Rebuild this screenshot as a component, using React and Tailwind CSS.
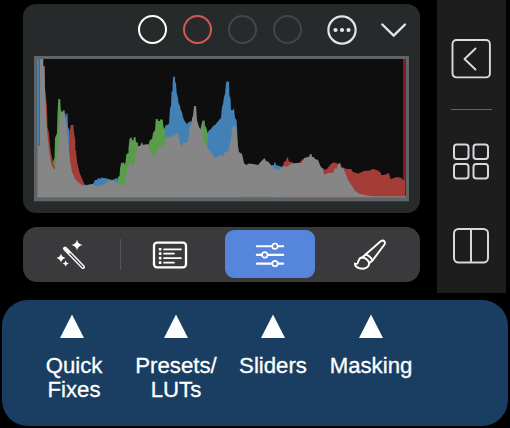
const BLUE =
  "M37 197V59H39.6V146H42V197Z M64 197V114L65 113L66 117L66.3 113.5H67.5L68 127L69.5 130L70.5 150L72 165L75 174L80 182L86 185L93 184L95 180L97 180L98 178L100 179L101 177.5L104 178L107 178.5L112 180L117 178L118 180L121 182L124 184L125 187V197Z M165 197V126L169 124L170 108L171 106L171.5 92L172.5 91L172.7 82L173.5 76L175 77L175.2 82L176 83L176.7 93L178 98L178.5 103L180 106L180.7 110L182 112L182.7 116L184 120L186.7 124L189 122L191 121L203 132L207 135.5L208.5 131L211 129L213 126L215 125L217.7 121.7L219 120L221 118L222 107L223 104L224 97L225 94L226 83L227 81L229 82L229.5 96L230.5 98L231 110H233L234 108L235 118L236.5 120L237 126L238 147V197Z M272 197V165L274 165V163L275 162L276 165L281 166.5V197Z";
const GREEN =
  "M51 197V170L52.5 167L53.5 160L54.5 158L55 138L57 133L57.5 113L58.3 99H60.2L60.8 110L62 113L63 125V197Z M117 197V184L118 177L119.5 176L120 169L121 163L124 162.5L125 165L126.5 154L128.5 153V148L129.5 139L131 137L133 141L134 137H135.5L136 142L138 143V147L148 146L150 140L152 139L153 133L155 130L155.8 119H157.5L158.5 121L160 121V119.5H162.7L163.5 127L165 129L166 145V197Z M200 197V131L202.5 120.5H204.6L205 126L206 127L208 134V140Z";
const RED =
  "M43 197V66L44.5 67L45 89L47 107L47.5 127L49 133L50 145L51 153L53 162L55 168V197Z M69 197V140L70 131L70.7 125H73.5L74 133L75.3 140V150L76 151L77 161.5L79.3 171.7L81.7 178L84.3 184V197Z M283 197V166L284 161.7L286 161L287 157L288 158L289 162L291 161.5L293 163L300 163L302 159L304 161L321 170L323 168L325 170L327 169L330 165L333 162.5L336 163L338 164L340 162.5L341.7 167L346.7 169L351 169L353 172L358 173.5L362 172L365 170.7H369L373 169L378 170.5L381 173V175L384 175L389 173L390.5 179L394 178L397 177L401.7 178L403.5 181V59H405.5V197Z";
const GRAY =
  "M38 197V146H39.6V59H43.3V66H44.5L45 88L46 110L47 130L49 150L51 163L53 168L55 170L56 160L57.5 155L59 138L60 122L61.3 111L63 112L63.3 110H64.5L65 117L66 120L67 131L68 140L70 160L72 172L75 179L80 184L85 186L92 184L96 186L100 186L105 184L108 181L111 180L114 181L118 184L124 186L126 177L128 166L130 164L134 166L136 153L138 146L140 146L142 142L143 145L148 144L150 150L152 155.5H155.5L158 150L160 145L163 147L165 139L167 137L168.5 136L170 138L173 135L175 136L177 132L178.5 136L180 143L181.7 147L183 142.5L186.5 143L188.7 137L190 126L191.5 124L192 118L193 116L194 106H196L197 120L199 127L202.5 131.5L203.5 141L206.7 146.7L210.7 151.7L215 158L217 157L220 155L222 156L224 155L225 152L228 151L231 140L232 129L233.5 125L235 127L236.5 129L237 140L239 152L242 154L243 158L244 163L246 165L249 163.5L253 164L258 165L261 161.5L264.5 158L266 161L268 161.5L272 166L275 169L280 170L282 166L287 166.7L291 164L297 163L302 162.5L304 158L308 157L309.5 156L310 154L311.5 154L312 157L314 157L315 159L318 160L320 165L321 167L323 169L324 175L328 173L333 172.7L335 168L336.5 169L338 164L340 163.5L341 168L343 168L345 172L348 180L352 186L355 190.7L360 194L367 195.5L378 196.7Z";

function Histogram() {
  return (
    <svg className="block h-[146px] w-[375px] shrink-0" viewBox="34 56 375 146">
      <rect x="34" y="56" width="375" height="145.3" fill="#606466" />
      <rect x="37" y="59" width="369" height="138" fill="#0d0e0d" />
      <path d={BLUE} fill="#4280b6" />
      <path d={GREEN} fill="#599c4c" />
      <path d={RED} fill="#a43c38" />
      <path d={GRAY} fill="#868686" />
      <path d="M404.5 59V180" stroke="#872229" strokeWidth="1.6" />
      <path d="M37 196.8H406" stroke="#888" strokeWidth="1" />
    </svg>
  );
}

function Header() {
  return (
    <div className="mb-px flex h-[51px] w-full items-center justify-end pr-[13px]">
      <div className="flex gap-[16px]">
        <span className="size-[29px] rounded-full border-2 border-white" />
        <span className="size-[29px] rounded-full border-2 border-[#d15b52]" />
        <span className="size-[29px] rounded-full border-2 border-[#434647]" />
        <span className="size-[29px] rounded-full border-2 border-[#434647]" />
      </div>
      <svg className="ml-[25px] size-[30px]" viewBox="0 0 30 30" fill="none">
        <circle cx="15" cy="15" r="13.6" stroke="#e2e5e6" strokeWidth="2.2" />
        <g fill="#e8eaeb">
          <circle cx="8.5" cy="15" r="2.1" />
          <circle cx="15" cy="15" r="2.1" />
          <circle cx="21.5" cy="15" r="2.1" />
        </g>
      </svg>
      <svg className="ml-[23px] h-[16px] w-[27px]" viewBox="0 0 27 16" fill="none" stroke="#e2e5e6" strokeWidth="2.4" strokeLinecap="round" strokeLinejoin="round">
        <path d="M2.3 2.5L13.7 13.7L25 2.5" />
      </svg>
    </div>
  );
}

function WandIcon() {
  return (
    <svg className="size-[32px]" viewBox="0 0 32 32" fill="none">
      <path d="M9 9.5L27 28" stroke="#f2f2f4" strokeWidth="4" strokeLinecap="round" />
      <path d="M14 14.7L26.8 27.8" stroke="#3a3a3d" strokeWidth="1.2" strokeLinecap="round" />
      <g fill="#fff">
        <path d="M21 0.5Q21.7 5 26.5 6Q21.7 7 21 11.5Q20.3 7 15.5 6Q20.3 5 21 0.5Z" />
        <path d="M5 14.5Q5.6 18 9.5 19Q5.6 20 5 23.5Q4.4 20 0.5 19Q4.4 18 5 14.5Z" />
        <path d="M9.7 21.5Q10.2 24 13 24.5Q10.2 25 9.7 27.5Q9.2 25 6.5 24.5Q9.2 24 9.7 21.5Z" />
      </g>
    </svg>
  );
}

function PresetsIcon() {
  return (
    <svg className="h-[28px] w-[36px]" viewBox="0 0 36 28" fill="none" stroke="#fff">
      <rect x="2" y="1.7" width="32" height="24.6" rx="3" strokeWidth="2.3" />
      <path d="M12 8.3H29M12 12.6H22M12 17.1H29M12 21.6H22" strokeWidth="1.8" strokeLinecap="round" />
      <path d="M6.8 8.3H9.4M6.8 12.6H9.4M6.8 17.1H9.4M6.8 21.6H9.4" strokeWidth="2.6" />
    </svg>
  );
}

function SlidersIcon() {
  return (
    <svg className="mt-[2px] h-[26px] w-[30px]" viewBox="0 0 30 26" stroke="#fff" strokeLinecap="round" fill="#5685dc">
      <path d="M1.8 4.2H28.2M1.8 12.9H28.2M1.8 21.6H28.2" strokeWidth="2.1" />
      <circle cx="20" cy="4.2" r="2.7" strokeWidth="1.7" />
      <circle cx="9.7" cy="12.9" r="2.7" strokeWidth="1.7" />
      <circle cx="20" cy="21.6" r="2.7" strokeWidth="1.7" />
    </svg>
  );
}

function BrushIcon() {
  return (
    <svg className="size-[32px]" viewBox="0 0 32 32" fill="none" stroke="#fff" strokeWidth="1.9" strokeLinecap="round" strokeLinejoin="round">
      <path d="M11.5 15.5L26.7 2.2Q29 .8 30.5 2.5Q31.4 4 30.3 5.8L18.4 21.6" />
      <path d="M11.5 15.5Q16.5 16.8 18.4 21.6L15.2 24.3Q13.5 19 8.2 18.5Z" />
      <path d="M8.2 18.5C4.8 18.5 4.7 22 3.8 23.8Q2.8 25.7 .9 24.5Q.8 27.5 4.7 29C10.5 31 15 28.5 15.2 24.3" />
    </svg>
  );
}

function Toolbar() {
  return (
    <div className="flex h-[55px] w-[397px] items-center rounded-[14px] bg-[#3a3a3d]">
      <div className="flex w-[97px] shrink-0 justify-center">
        <WandIcon />
      </div>
      <span className="h-[31px] w-px shrink-0 bg-[#555558]" />
      <div className="flex w-[98px] shrink-0 justify-center">
        <PresetsIcon />
      </div>
      <div className="mb-[1px] ml-[6px] flex h-[48px] w-[90px] shrink-0 items-center justify-center rounded-[9px] bg-[#5685dc]">
        <SlidersIcon />
      </div>
      <div className="flex flex-1 justify-center pl-[4px]">
        <BrushIcon />
      </div>
    </div>
  );
}

function Sidebar() {
  return (
    <aside className="ml-[17px] flex h-[293px] w-[69px] flex-col items-center bg-[#1d1d1e] pr-px">
      <svg className="mt-[39px] size-[40px]" viewBox="0 0 40 40" fill="none" stroke="#dcdae0" strokeWidth="1.9" strokeLinecap="round" strokeLinejoin="round">
        <rect x="1.5" y="1" width="37.4" height="37.4" rx="4" />
        <path d="M24.5 9.5L13.5 20L24.5 30.5" />
      </svg>
      <span className="mt-[30px] h-px w-[41px] bg-[#656568]" />
      <svg className="mt-[32px] size-[38px]" viewBox="0 0 38 38" fill="none" stroke="#d9d6de" strokeWidth="2">
        <rect x="2" y="2.5" width="14.5" height="14.5" rx="2.8" />
        <rect x="21.5" y="2.5" width="14.5" height="14.5" rx="2.8" />
        <rect x="2" y="22" width="14.5" height="14.5" rx="2.8" />
        <rect x="21.5" y="22" width="14.5" height="14.5" rx="2.8" />
      </svg>
      <svg className="mt-[46px] size-[38px]" viewBox="0 0 38 38" fill="none" stroke="#d9d6de" strokeWidth="2">
        <rect x="2" y="3" width="34" height="33.5" rx="4.5" />
        <path d="M19 3V36" />
      </svg>
    </aside>
  );
}

function Label({ lines, className, arrow = "" }) {
  return (
    <div className={`flex shrink-0 flex-col items-center ${className}`}>
      <svg className={`h-[24px] w-[26px] ${arrow}`} viewBox="0 0 26 24">
        <path d="M13 0.5L25 24H1Z" fill="#fff" />
      </svg>
      <div className="mt-[16px] text-center text-[22.2px] leading-[24px] whitespace-nowrap text-white [-webkit-text-stroke:0.3px_white]">
        {lines.map((line) => (
          <div key={line}>{line}</div>
        ))}
      </div>
    </div>
  );
}

export default function App() {
  return (
    <div className="flex h-[428px] w-[510px] flex-col overflow-hidden bg-black font-['Liberation_Sans',Arial,sans-serif]">
      <div className="flex h-[300px]">
        <div className="ml-[23px] flex w-[397px] flex-col pt-[4px]">
          <section className="mb-[14px] flex h-[209px] flex-col items-center rounded-[13px] bg-[#272a2b]">
            <Header />
            <Histogram />
          </section>
          <Toolbar />
        </div>
        <Sidebar />
      </div>
      <div className="ml-[2px] flex h-[126px] w-[506px] rounded-[26px] bg-[#1a3e62] pt-[14px]">
        <Label lines={["Quick", "Fixes"]} className="ml-[27px] w-[90px]" arrow="mr-[5px]" />
        <Label lines={["Presets/", "LUTs"]} className="ml-[12px] w-[90px]" />
        <Label lines={["Sliders"]} className="ml-[7px] w-[90px]" />
        <Label lines={["Masking"]} className="ml-[8px] w-[90px]" />
      </div>
    </div>
  );
}
